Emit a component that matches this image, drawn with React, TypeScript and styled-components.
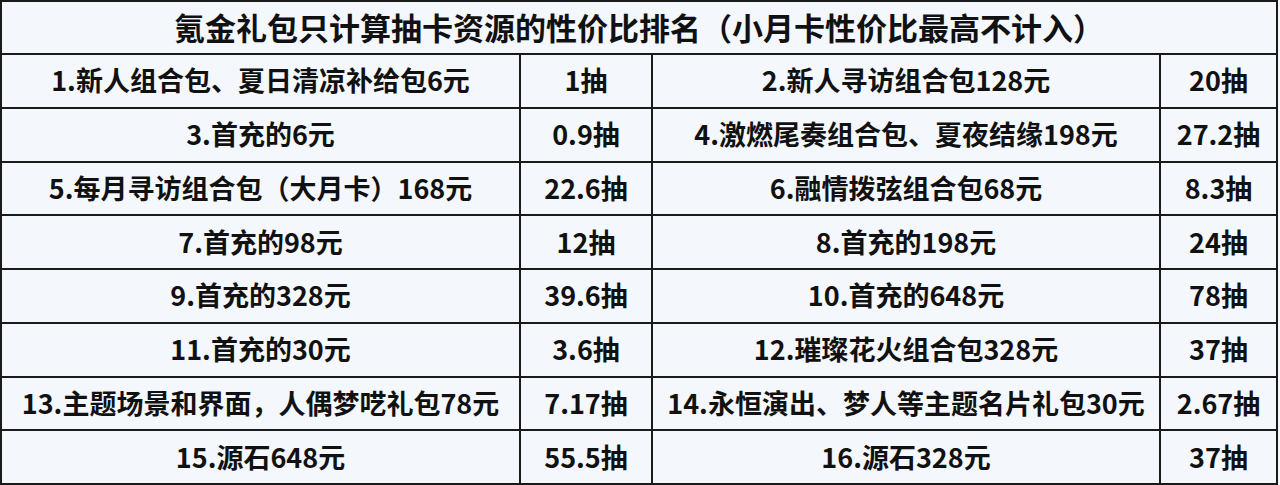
import React from "react";
import styled, { createGlobalStyle } from "styled-components";

const Global = createGlobalStyle`
  html, body { margin: 0; padding: 0; background: #f4f7fc; }
  body { font-family: "Noto Sans CJK SC", "Noto Sans", sans-serif; }
`;

const Table = styled.div`
  display: grid;
  width: 1278px;
  box-sizing: border-box;
  grid-template-columns: 517px 130px 506px 115px;
  grid-template-rows: 51px repeat(8, 51.75px);
  gap: 2px;
  padding: 2px;
  background: #1a1a1a;
`;

const Cell = styled.div<{ $title?: boolean }>`
  grid-column: ${(p) => (p.$title ? "1 / span 4" : "auto")};
  display: flex;
  align-items: center;
  justify-content: center;
  background: #f4f7fc;
  color: #111;
  font-family: "Noto Sans CJK SC", "Noto Sans", sans-serif;
  font-weight: 700;
  font-size: ${(p) => (p.$title ? "31px" : "27px")};
  white-space: nowrap;
  line-height: 1;
  padding-bottom: 2px;
`;

const rows: [string, string, string, string][] = [
  ["1.新人组合包、夏日清凉补给包6元", "1抽", "2.新人寻访组合包128元", "20抽"],
  ["3.首充的6元", "0.9抽", "4.激燃尾奏组合包、夏夜结缘198元", "27.2抽"],
  ["5.每月寻访组合包（大月卡）168元", "22.6抽", "6.融情拨弦组合包68元", "8.3抽"],
  ["7.首充的98元", "12抽", "8.首充的198元", "24抽"],
  ["9.首充的328元", "39.6抽", "10.首充的648元", "78抽"],
  ["11.首充的30元", "3.6抽", "12.璀璨花火组合包328元", "37抽"],
  ["13.主题场景和界面，人偶梦呓礼包78元", "7.17抽", "14.永恒演出、梦人等主题名片礼包30元", "2.67抽"],
  ["15.源石648元", "55.5抽", "16.源石328元", "37抽"],
];

export default function App() {
  return (
    <>
      <Global />
      <Table>
        <Cell $title>氪金礼包只计算抽卡资源的性价比排名（小月卡性价比最高不计入）</Cell>
        {rows.map((r, i) =>
          r.map((t, j) => <Cell key={`${i}-${j}`}>{t}</Cell>)
        )}
      </Table>
    </>
  );
}
